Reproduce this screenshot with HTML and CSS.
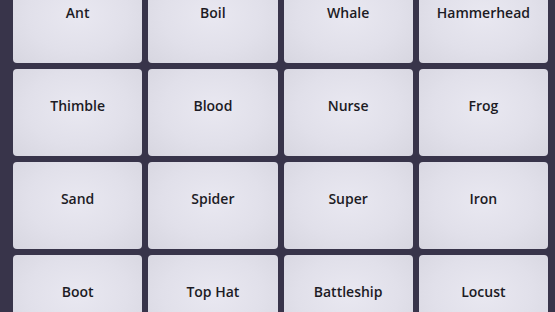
FILE: index.html
```html
<!DOCTYPE html>
<html lang="en">
<head>
    <meta charset="UTF-8">
    <meta name="viewport" content="width=device-width, initial-scale=1.0">
    <title>Word Tiles</title>
    <link rel="stylesheet" href="styles.css">
</head>
<body>
    <div class="board">
        <div class="tile">Ant</div>
        <div class="tile">Boil</div>
        <div class="tile">Whale</div>
        <div class="tile">Hammerhead</div>

        <div class="tile">Thimble</div>
        <div class="tile">Blood</div>
        <div class="tile">Nurse</div>
        <div class="tile">Frog</div>

        <div class="tile">Sand</div>
        <div class="tile">Spider</div>
        <div class="tile">Super</div>
        <div class="tile">Iron</div>

        <div class="tile">Boot</div>
        <div class="tile">Top Hat</div>
        <div class="tile">Battleship</div>
        <div class="tile">Locust</div>
    </div>
</body>
</html>
```

FILE: styles.css
```css
html, body {
    margin: 0;
    padding: 0;
    height: 100%;
    overflow: hidden;
}
body {
    background-color: #38344a;
    font-family: "Open Sans", "Noto Sans", sans-serif;
    color: #1c1b24;
}
.board {
    display: grid;
    grid-template-columns: repeat(4, 1fr);
    grid-auto-rows: 87px;
    gap: 6px 6px;
    padding: 0 7px 0 13px;
    margin-top: -24px;
}
.tile {
    display: flex;
    align-items: center;
    justify-content: center;
    padding-bottom: 14px;
    box-sizing: border-box;
    border-radius: 4px;
    background: radial-gradient(ellipse at 50% 45%, #e9e8f1 0%, #e1e0ea 55%, #d7d6e0 100%);
    font-size: 14px;
    font-weight: 600;
}
```
